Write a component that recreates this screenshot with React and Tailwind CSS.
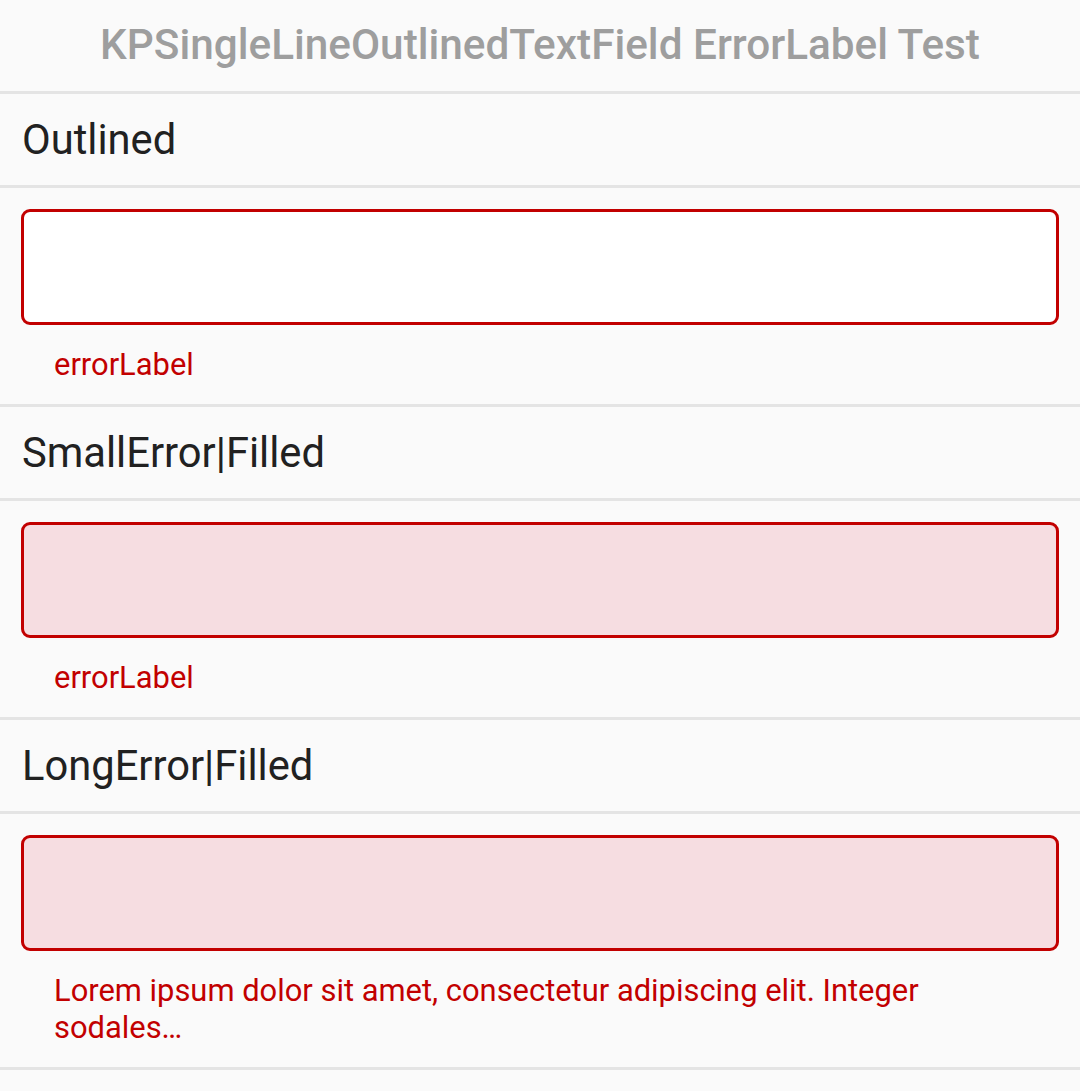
const Divider = () => <div className="h-[3px] bg-[#e4e4e4]" />;

const SectionRow = ({ title }) => (
  <div className="h-[91px] flex items-center px-[22px] text-[41.7px] text-[#212121] leading-none">
    {title}
  </div>
);

const ErrorField = ({ filled, error }) => (
  <div className="px-[21px] pt-[21px] pb-[21px]">
    <div
      className={
        'h-[116px] rounded-[9px] border-[3px] border-[#c20000] ' +
        (filled ? 'bg-[#f6dde1]' : 'bg-white')
      }
    />
    <div className="pl-[33px] pr-[33px] pt-[21px] text-[30.9px] leading-[37px] text-[#c20000]">
      {error}
    </div>
  </div>
);

const App = () => {
  const sections = [
    { title: 'Outlined', filled: false, error: 'errorLabel' },
    { title: 'SmallError|Filled', filled: true, error: 'errorLabel' },
    {
      title: 'LongError|Filled',
      filled: true,
      error: 'Lorem ipsum dolor sit amet, consectetur adipiscing elit. Integer sodales…',
    },
  ];

  return (
    <div className="min-h-[1091px] bg-[#fafafa] font-['Roboto','Liberation_Sans',sans-serif]">
      {/* Toolbar title */}
      <div className="h-[91px] flex items-center justify-center text-[42.3px] font-medium text-[#9e9e9e] leading-none">
        KPSingleLineOutlinedTextField ErrorLabel Test
      </div>
      <Divider />

      {sections.map((s) => (
        <div key={s.title}>
          <SectionRow title={s.title} />
          <Divider />
          <ErrorField filled={s.filled} error={s.error} />
          <Divider />
        </div>
      ))}
    </div>
  );
};

export default App;
